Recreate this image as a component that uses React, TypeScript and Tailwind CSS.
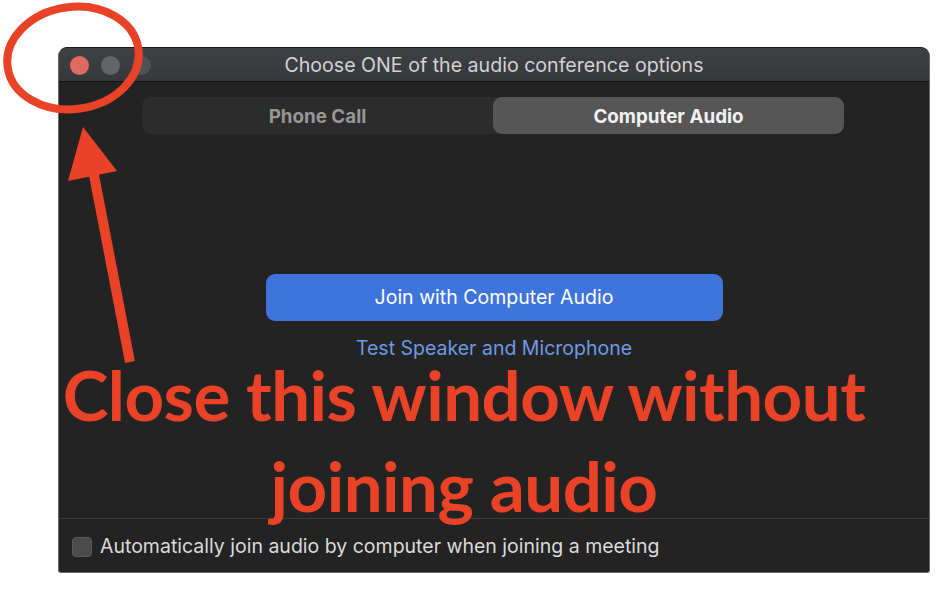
import React from 'react';

const RED = '#ea4227';

const TrafficLights = () => (
  <div className="flex items-center gap-[12px] pl-[11px] pt-[2px]">
    <span className="w-[19px] h-[19px] rounded-full bg-[#df6a5f]" />
    <span className="w-[19px] h-[19px] rounded-full bg-[#636466]" />
    <span className="w-[19px] h-[19px] rounded-full bg-[#505153]" />
  </div>
);

const Annotations = () => (
  <>
    <svg className="absolute left-0 top-0 pointer-events-none" width="952" height="592" viewBox="0 0 952 592">
      <ellipse cx="73" cy="58" rx="66" ry="51" fill="none" stroke={RED} strokeWidth="8" transform="rotate(-8 73 58)" />
      <line x1="130" y1="362" x2="93" y2="170" stroke={RED} strokeWidth="10" />
      <polygon points="83,127 68,181 117,171" fill={RED} />
    </svg>
    <div
      className="absolute left-[30px] top-[360px] w-[868px] text-center font-bold text-[#ea4227] text-[69px] leading-[70px] tracking-[-0.5px]"
      style={{ fontFamily: 'Lato, "Open Sans", sans-serif' }}
    >
      <div>Close this window without</div>
      <div className="mt-[21px]">joining audio</div>
    </div>
  </>
);

export default function App() {
  return (
    <div className="relative w-[952px] h-[592px] bg-white overflow-hidden" style={{ fontFamily: 'Inter, Roboto, sans-serif' }}>
      <div className="ml-[58px] pt-[47px]">
        <div className="w-[872px] h-[526px] flex flex-col rounded-t-[9px] rounded-b-[3px] border border-[#6a6a6a] border-t-[#1b1b1b] bg-[#232323] overflow-hidden">
          {/* title bar */}
          <div className="relative h-[34px] shrink-0 flex items-center bg-gradient-to-b from-[#404144] to-[#37383b] border-b border-[#141414]">
            <TrafficLights />
            <div className="absolute inset-0 pt-[3px] flex items-center justify-center text-[19.6px] text-[#d2d2d3]">
              Choose ONE of the audio conference options
            </div>
          </div>

          {/* body */}
          <div className="flex-1 flex flex-col items-center">
            <div className="mt-[15px] w-[702px] h-[37px] ml-[-2px] flex rounded-[9px] bg-[#2c2c2c]">
              <div className="flex-1 flex items-center justify-center pt-[3px] text-[18.8px] font-bold text-[#979797]">Phone Call</div>
              <div className="flex-1 flex items-center justify-center pt-[3px] rounded-[9px] bg-[#565656] text-[18.8px] font-bold text-[#f2f2f2]">
                Computer Audio
              </div>
            </div>

            <button className="mt-[140px] w-[457px] h-[47px] rounded-[9px] bg-[#3e74dc] text-white text-[19.5px]">
              Join with Computer Audio
            </button>
            <div className="mt-[15px] text-[19.5px] leading-[24px] text-[#6d9ae4]">Test Speaker and Microphone</div>
          </div>

          {/* footer */}
          <div className="h-[54px] shrink-0 border-t border-[#3a3a3a] flex items-center pl-[13px] gap-[8px] pt-[2px]">
            <span className="w-[20px] h-[20px] rounded-[4px] bg-[#4b4b4b] border border-[#5a5a5a]" />
            <span className="text-[19.5px] text-[#dadada]">
              Automatically join audio by computer when joining a meeting
            </span>
          </div>
        </div>
      </div>
      <Annotations />
    </div>
  );
}
